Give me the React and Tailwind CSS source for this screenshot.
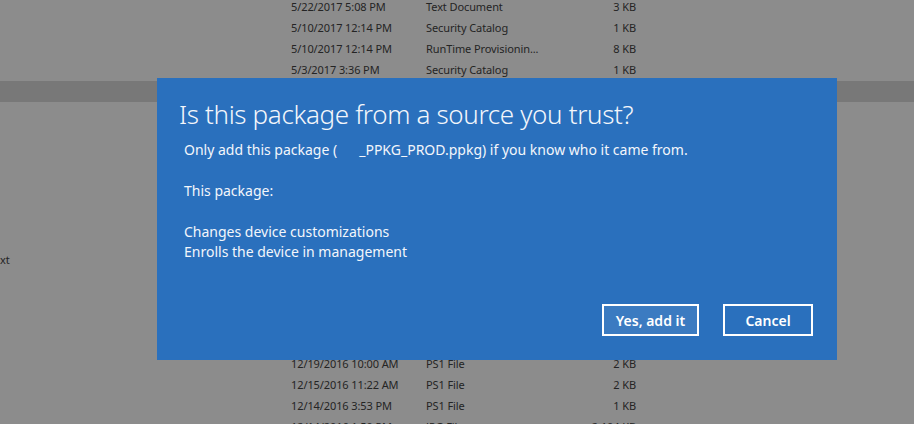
import React from 'react';

const rows = [
  ['', '5/22/2017 5:08 PM', 'Text Document', '3 KB'],
  ['', '5/10/2017 12:14 PM', 'Security Catalog', '1 KB'],
  ['', '5/10/2017 12:14 PM', 'RunTime Provisionin...', '8 KB'],
  ['', '5/3/2017 3:36 PM', 'Security Catalog', '1 KB'],
  ['', '5/3/2017 3:36 PM', 'Provisioning Package', '12 KB'],
  ['', '4/28/2017 9:12 AM', 'Text Document', '1 KB'],
  ['', '4/20/2017 2:40 PM', 'XML Document', '4 KB'],
  ['', '3/14/2017 11:05 AM', 'PS1 File', '2 KB'],
  ['', '2/2/2017 4:18 PM', 'PS1 File', '3 KB'],
  ['', '1/30/2017 8:47 AM', 'Text Document', '1 KB'],
  ['', '1/12/2017 1:22 PM', 'PS1 File', '2 KB'],
  ['', '1/9/2017 10:10 AM', 'PS1 File', '1 KB'],
  ['xt', '1/5/2017 3:01 PM', 'Text Document', '1 KB'],
  ['', '12/30/2016 9:00 AM', 'PS1 File', '2 KB'],
  ['', '12/28/2016 4:44 PM', 'PS1 File', '1 KB'],
  ['', '12/22/2016 2:15 PM', 'XML Document', '5 KB'],
  ['', '12/20/2016 11:30 AM', 'PS1 File', '2 KB'],
  ['', '12/19/2016 10:00 AM', 'PS1 File', '2 KB'],
  ['', '12/15/2016 11:22 AM', 'PS1 File', '2 KB'],
  ['', '12/14/2016 3:53 PM', 'PS1 File', '1 KB'],
  ['', '12/14/2016 1:50 PM', 'JPG File', '2,104 KB'],
];

export default function App() {
  return (
    <div className="relative w-[914px] h-[424px] overflow-hidden bg-[#8c8c8c] text-[#242424]" style={{ fontFamily: '"Noto Sans", "Open Sans", sans-serif' }}>
      <div className="flex flex-col -mt-[3px] text-[11px] tracking-[-0.1px]">
        {rows.map((r, i) => (
          <div key={i} className={`flex items-center h-[21px] ${i === 4 ? 'bg-[#787878]' : ''}`}>
            <div className="w-[291px] leading-none">{r[0]}</div>
            <div className="w-[135px] whitespace-nowrap">{r[1]}</div>
            <div className="w-[150px] whitespace-nowrap">{r[2]}</div>
            <div className="w-[60px] text-right whitespace-nowrap">{r[3]}</div>
          </div>
        ))}
      </div>

      <div className="absolute left-[157px] top-[78px] w-[680px] h-[282px] bg-[#2a70bd] text-[#f3f6fb] flex flex-col pt-[19px] pl-[22px] pr-[24px]">
        <h1 className="text-[26px] leading-[34px] font-light tracking-[-0.35px]">Is this package from a source you trust?</h1>
        <div className="pl-[5px] text-[14px] leading-[20px]">
          <p className="mt-[9px]">
            Only add this package (<span className="inline-block w-[22px]" />_PPKG_PROD.ppkg) if you know who it came from.
          </p>
          <p className="mt-[21px]">This package:</p>
          <p className="mt-[21px]">Changes device customizations</p>
          <p className="mt-0">Enrolls the device in management</p>
        </div>
        <div className="flex justify-end gap-[24px] mt-[42px]">
          <button className="w-[97px] h-[32px] border-2 border-white bg-[#3b7bc1] text-white text-[14px] font-semibold">Yes, add it</button>
          <button className="w-[90px] h-[32px] border-2 border-white text-white text-[14px] font-semibold">Cancel</button>
        </div>
      </div>
    </div>
  );
}
